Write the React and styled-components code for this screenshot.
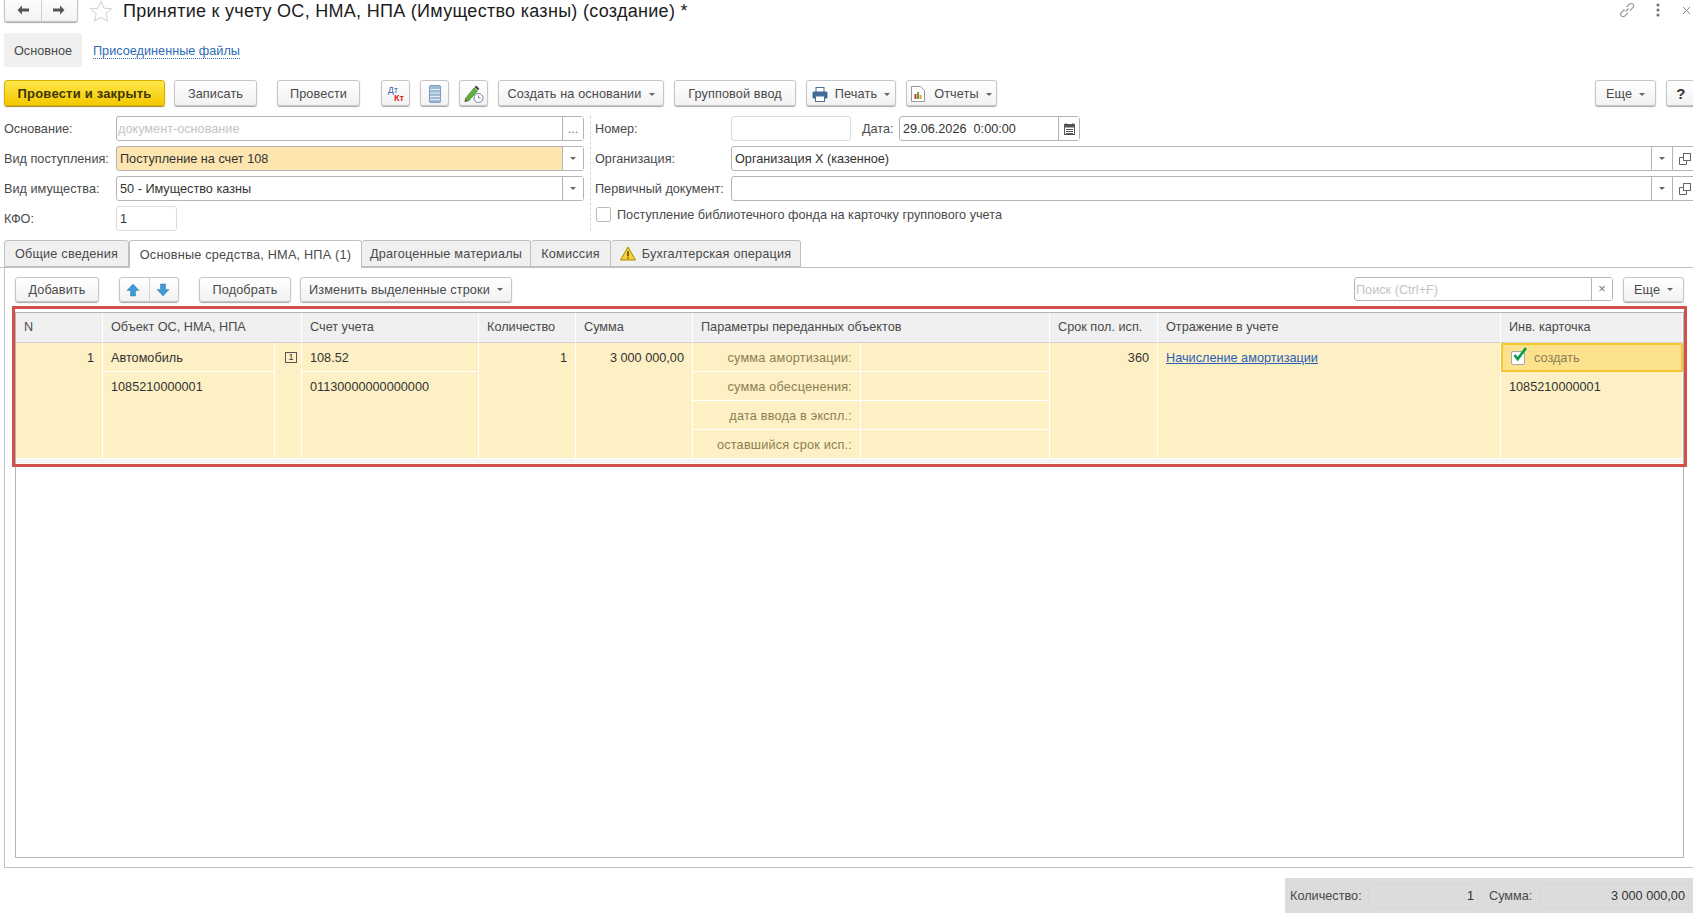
import styled, { createGlobalStyle } from "styled-components";

const GlobalStyle = createGlobalStyle`
  html, body {
    margin: 0;
    padding: 0;
    background: #fff;
    overflow: hidden;
  }
  body {
    font-family: "Liberation Sans", Arial, sans-serif;
    font-size: 12.7px;
    color: #4a4a4a;
  }
  * {
    box-sizing: border-box;
  }
`;

const Page = styled.div`
  width: 1693px;
  height: 921px;
  overflow: hidden;
  display: flex;
  flex-direction: column;
`;

const Header = styled.header`
  height: 22px;
  display: flex;
  align-items: flex-end;
  padding-left: 4px;
  flex: none;
`;

const NavGroup = styled.div`
  width: 74px;
  height: 28px;
  display: flex;
  flex: none;
  background: linear-gradient(#fff, #f3f3f3);
  border: 1px solid #c4c4c4;
  border-radius: 3px;
  box-shadow: 0 1px 1px #aaa;
`;

const NavButton = styled.div`
  flex: 1;
  display: flex;
  align-items: flex-end;
  justify-content: center;
  padding-bottom: 5px;
  & + & {
    border-left: 1px solid #d0d0d0;
  }
`;

const Title = styled.h1`
  margin: 0 0 0 10px;
  font-size: 18px;
  font-weight: 400;
  letter-spacing: 0.29px;
  line-height: 22px;
  color: #1c1c1c;
  white-space: nowrap;
`;

const HeaderActions = styled.div`
  margin-left: auto;
  display: flex;
  align-items: center;
  align-self: flex-start;
  height: 20px;
  color: #8a8a8a;
`;

const SectionBar = styled.nav`
  margin-top: 11px;
  height: 34px;
  padding-left: 4px;
  display: flex;
  align-items: center;
  flex: none;
`;

const SectionTab = styled.div`
  width: 78px;
  height: 34px;
  padding-top: 1px;
  display: flex;
  align-items: center;
  justify-content: center;
  background: #f0f0f0;
  border-radius: 3px;
`;

const SectionLink = styled.a`
  margin: 2px 0 0 11px;
  color: #2f6cb5;
  border-bottom: 1px dotted #2f6cb5;
  line-height: 14px;
`;

const Toolbar = styled.div`
  margin-top: 13px;
  width: 1705px;
  height: 26px;
  padding-left: 4px;
  display: flex;
  gap: 10px;
  flex: none;
`;

const Button = styled.button`
  width: ${(p) => p.$w}px;
  height: ${(p) => p.$h || 26}px;
  margin-left: ${(p) => p.$ml || 0}px;
  padding: ${(p) => (p.$h ? 0 : "2px 0 0")};
  flex: none;
  display: flex;
  align-items: center;
  justify-content: center;
  gap: ${(p) => p.$gap || 0}px;
  font: inherit;
  letter-spacing: 0.12px;
  color: #4a4a4a;
  background: linear-gradient(#fff, #f2f2f2);
  border: 1px solid #c6c6c6;
  border-radius: 3px;
  box-shadow: 0 1px 1px #a8a8a8;
`;

const PrimaryButton = styled(Button)`
  padding: 0;
  font-size: 13px;
  font-weight: 700;
  letter-spacing: 0.2px;
  color: #3f3500;
  background: linear-gradient(#fde84a, #f5c800);
  border-color: #d8b100;
  box-shadow: 0 1px 1px #a08a20;
`;

const PushedButton = styled(Button)`
  margin-left: auto;
`;

const HelpButton = styled(Button)`
  padding: 0 9px 0 0;
  font-size: 15px;
  font-weight: 700;
  color: #333;
`;

const Caret = styled.span`
  display: inline-block;
  vertical-align: middle;
  width: 0;
  height: 0;
  margin-left: ${(p) => (p.$flush ? 0 : 7)}px;
  border-left: 3px solid transparent;
  border-right: 3px solid transparent;
  border-top: 3px solid #666;
`;

const Form = styled.section`
  margin-top: 10px;
  margin-left: 4px;
  display: flex;
  flex: none;
  height: 115px;
`;

const FormColumn = styled.div`
  width: ${(p) => p.$w}px;
  display: flex;
  flex-direction: column;
  gap: 5px;
  flex: none;
`;

const FormDivider = styled.div`
  width: 5px;
  margin-left: 5px;
  border-left: 1px dashed #d4d4d4;
  flex: none;
`;

const FormRow = styled.div`
  height: 25px;
  display: flex;
  align-items: center;
`;

const Label = styled.label`
  width: ${(p) => p.$w}px;
  flex: none;
  white-space: nowrap;
  margin-left: ${(p) => p.$ml || 0}px;
`;

const Field = styled.div`
  width: ${(p) => p.$w}px;
  height: 25px;
  flex: none;
  display: flex;
  background: ${(p) => p.$bg || "#fff"};
  border: 1px solid ${(p) => (p.$soft ? "#dcdcdc" : "#b4b4b4")};
  border-radius: 3px;
  color: #333;
`;

const FieldValue = styled.div`
  flex: 1;
  min-width: 0;
  padding-left: ${(p) => (p.$hint ? 1 : 3)}px;
  line-height: 25px;
  white-space: nowrap;
  color: ${(p) => (p.$hint ? "#c4c4c4" : "#333")};
`;

const FieldButton = styled.div`
  width: ${(p) => p.$w || 21}px;
  flex: none;
  display: flex;
  align-items: center;
  justify-content: center;
  background: #fff;
  border-left: 1px solid #b4b4b4;
  color: #777;
`;

const CheckBox = styled.span`
  width: 15px;
  height: 15px;
  flex: none;
  background: #fff;
  border: 1px solid #bdbdbd;
  border-radius: 2px;
`;

const CheckLabel = styled.div`
  display: flex;
  align-items: center;
  gap: 6px;
  margin: 1px 0 0 1px;
`;

const TabBar = styled.div`
  margin-top: 9px;
  height: 28px;
  padding-left: 4px;
  display: flex;
  flex: none;
  border-bottom: 1px solid #c0c0c0;
`;

const Tab = styled.div`
  width: ${(p) => p.$w}px;
  height: ${(p) => (p.$active ? 28 : 27)}px;
  flex: none;
  display: flex;
  align-items: center;
  justify-content: center;
  gap: 6px;
  letter-spacing: 0.2px;
  background: ${(p) => (p.$active ? "#fff" : "#f0f0f0")};
  border: 1px solid #c0c0c0;
  border-bottom: ${(p) => (p.$active ? "none" : "1px solid #c0c0c0")};
  border-left: ${(p) => (p.$first || p.$active ? "1px solid #c0c0c0" : "none")};
  border-radius: 3px 3px 0 0;
`;

const Panel = styled.section`
  margin-left: 4px;
  height: 600px;
  flex: none;
  padding: 9px 9px 9px 10px;
  display: flex;
  flex-direction: column;
  border-left: 1px solid #c0c0c0;
  border-bottom: 1px solid #c0c0c0;
`;

const PanelToolbar = styled.div`
  height: 25px;
  flex: none;
  display: flex;
  align-items: flex-start;
`;

const ArrowGroup = styled.div`
  width: 60px;
  height: 25px;
  margin-left: 20px;
  flex: none;
  display: flex;
  background: linear-gradient(#fff, #f2f2f2);
  border: 1px solid #c6c6c6;
  border-radius: 3px;
  box-shadow: 0 1px 1px #a8a8a8;
`;

const ArrowCell = styled.div`
  flex: 1;
  padding-right: 2px;
  display: flex;
  align-items: center;
  justify-content: center;
  & + & {
    border-left: 1px solid #d4d4d4;
  }
`;

const SearchField = styled(Field)`
  margin-left: auto;
  width: 259px;
  height: 24px;
`;

const TableFrame = styled.div`
  position: relative;
  margin-top: 10px;
  flex: 1;
  border: 1px solid #b4b4b4;
`;

const RedFrame = styled.div`
  position: absolute;
  left: -4px;
  top: -7px;
  right: -4px;
  height: 161px;
  border: 3px solid #d2524b;
  pointer-events: none;
`;

const Grid = styled.div`
  display: grid;
  grid-template-columns: 87px 172px 27px 177px 97px 117px 168px 189px 108px 343px 182px;
  grid-template-rows: 30px repeat(4, 29px);
  padding-bottom: 3px;
  background: #f6f6f6;
  border-bottom: 1px solid #f0f0f0;
`;

const HeadCell = styled.div`
  grid-column: span ${(p) => p.$span || 1};
  padding-left: 8px;
  line-height: 29px;
  white-space: nowrap;
  background: #f0f0f0;
  border-right: 1px solid #fff;
  border-bottom: 1px solid #d4d4d4;
`;

const Cell = styled.div`
  grid-row: span ${(p) => p.$rows || 1};
  padding: 1px 8px 0;
  line-height: 28px;
  white-space: nowrap;
  text-align: ${(p) => p.$align || "left"};
  letter-spacing: ${(p) => (p.$hint ? "0.2px" : 0)};
  color: ${(p) => (p.$hint ? "#8c7f52" : "#333")};
  background: #fdf0c4;
  border-right: 1px solid #fff;
  border-bottom: 1px solid ${(p) => (p.$open ? "#fdf0c4" : "#fff")};
`;

const IconCell = styled(Cell)`
  padding: 9px 0 0 10px;
  line-height: 0;
`;

const NumberBadge = styled.span`
  display: inline-block;
  width: 12px;
  height: 11px;
  font-size: 9px;
  line-height: 9px;
  text-align: center;
  color: #333;
  border: 1px solid #555;
`;

const TableLink = styled.a`
  color: #2a5fb4;
  text-decoration: underline;
`;

const ActiveCell = styled(Cell)`
  display: flex;
  align-items: center;
  gap: 9px;
  padding: 0 0 0 8px;
  color: #8c7f52;
  background: #fde28e;
  border: 2px solid #fbc52d;
`;

const TickBox = styled.span`
  position: relative;
  width: 14px;
  height: 14px;
  flex: none;
  background: #fff;
  border: 1px solid #a9a9a9;
  border-radius: 2px;
  & > svg {
    position: absolute;
    left: 0;
    top: -5px;
  }
`;

const Footer = styled.footer`
  margin-top: 10px;
  margin-left: auto;
  width: 408px;
  height: 35px;
  flex: none;
  display: flex;
  align-items: center;
  padding-left: 5px;
  background: #dcdcdc;
`;

const FooterField = styled.div`
  width: ${(p) => p.$w}px;
  height: 24px;
  flex: none;
  padding-right: 3px;
  line-height: 23px;
  text-align: right;
  color: #333;
  border: 1px solid #d6d6d6;
  border-radius: 3px;
`;

const FooterLabel = styled.span`
  width: ${(p) => p.$w}px;
  flex: none;
  margin-left: ${(p) => p.$ml || 0}px;
`;

const ArrowLeft = () => (
  <svg width="14" height="12" viewBox="0 0 14 12">
    <path d="M6 1.5 1.5 6 6 10.5V7.5h7v-3H6z" fill="#555" />
  </svg>
);

const ArrowRight = () => (
  <svg width="14" height="12" viewBox="0 0 14 12">
    <path d="M8 1.5 12.5 6 8 10.5V7.5H1v-3h7z" fill="#555" />
  </svg>
);

const Star = () => (
  <svg width="24" height="22" viewBox="0 0 24 22" style={{ marginLeft: 11, flex: "none" }}>
    <path
      d="M12 1.2l3 7 7.6.6-5.8 5 1.8 7.4L12 17.3 5.4 21.2l1.8-7.4-5.8-5 7.6-.6z"
      fill="#fff"
      stroke="#cfcfcf"
    />
  </svg>
);

const LinkIcon = () => (
  <svg width="16" height="16" viewBox="0 0 16 16" fill="none" stroke="#999" strokeWidth="1.2">
    <path d="M6.5 9.5l3-3M5.5 7.5l-3 3a2.4 2.4 0 0 0 3.4 3.4l3-3M7.5 5.2l3-3a2.4 2.4 0 0 1 3.4 3.4l-3 3" />
  </svg>
);

const Dots = () => (
  <svg width="4" height="14" viewBox="0 0 4 14" style={{ marginLeft: 21 }}>
    <circle cx="2" cy="2" r="1.6" fill="#777" />
    <circle cx="2" cy="7" r="1.6" fill="#777" />
    <circle cx="2" cy="12" r="1.6" fill="#777" />
  </svg>
);

const CloseIcon = () => (
  <svg width="9" height="9" viewBox="0 0 9 9" style={{ marginLeft: 22, marginRight: 2 }}>
    <path d="M1 1l7 7M8 1 1 8" stroke="#888" strokeWidth="1" />
  </svg>
);

const DebitCredit = () => (
  <svg width="24" height="22" viewBox="0 0 24 22">
    <text x="4" y="10" fontSize="8.5" fill="#2a62a8" fontFamily="Liberation Sans">Дт</text>
    <text x="10" y="18" fontSize="9" fontWeight="700" fill="#d8231c" fontFamily="Liberation Sans">Кт</text>
  </svg>
);

const ListIcon = () => (
  <svg width="12" height="18" viewBox="0 0 12 18">
    <rect x="0.5" y="0.5" width="11" height="17" rx="1" fill="#9fbad6" stroke="#7f9ab8" />
    <path d="M1 4.5h10M1 8h10M1 11.5h10M1 14.5h10" stroke="#e4edf5" />
  </svg>
);

const PencilIcon = () => (
  <svg width="22" height="20" viewBox="0 0 22 20">
    <path d="M2 15 11 4l3.5 3L5.5 17z" fill="#5fae3c" stroke="#3c7d25" strokeWidth="0.6" />
    <path d="M11.5 3.2 13 1.6l3.4 3-1.4 1.7z" fill="#444" />
    <path d="M2 15l-.5 3.2 4-1.2z" fill="#6a5a3a" />
    <circle cx="15.5" cy="14" r="4.5" fill="#fff" stroke="#6c85a3" />
    <path d="M15.5 11.5V14h2" fill="none" stroke="#6c85a3" />
  </svg>
);

const PrinterIcon = () => (
  <svg width="16" height="15" viewBox="0 0 16 15">
    <rect x="4" y="0.5" width="8" height="5" fill="#fff" stroke="#4f6f8f" />
    <rect x="0.5" y="4.5" width="15" height="7" rx="1.5" fill="#3f6c96" />
    <rect x="3.5" y="9" width="9" height="5.5" fill="#fff" stroke="#4f6f8f" />
  </svg>
);

const ReportIcon = () => (
  <svg width="14" height="16" viewBox="0 0 14 16">
    <path d="M.5.5h9l4 4v11H.5z" fill="#fff" stroke="#999" />
    <rect x="3.5" y="8" width="2" height="5" fill="#d8342a" />
    <rect x="6" y="6" width="2" height="7" fill="#5fa83a" />
    <rect x="8.5" y="9" width="2" height="4" fill="#e0a020" />
  </svg>
);

const CalendarIcon = () => (
  <svg width="11" height="12" viewBox="0 0 11 12">
    <rect x="0.5" y="1.5" width="10" height="10" fill="#fff" stroke="#555" />
    <path d="M.5 2h10v2.5H.5z" fill="#555" />
    <path d="M2 0v2M9 0v2M2 6.5h7M2 8.5h7M2 10.5h7" stroke="#555" />
  </svg>
);

const OpenIcon = () => (
  <svg width="12" height="12" viewBox="0 0 12 12" fill="none" stroke="#666">
    <rect x="4.5" y="0.5" width="7" height="7" fill="#fff" />
    <path d="M4.5 4.5H.5v7h7V7.5" />
  </svg>
);

const BlueArrow = ({ down }) => (
  <svg width="14" height="14" viewBox="0 0 14 14" style={down ? { transform: "rotate(180deg)" } : undefined}>
    <path d="M7 1 13 7.5H9.5V13h-5V7.5H1z" fill="#3f9ad6" stroke="#2c7db5" strokeWidth="0.5" />
  </svg>
);

const Warning = () => (
  <svg width="16" height="15" viewBox="0 0 15 14">
    <path d="M7.5 1 14.5 13H.5z" fill="#f8d23a" stroke="#b99411" strokeLinejoin="round" />
    <path d="M7.5 5v4.5M7.5 10.5v1.2" stroke="#4a3b00" strokeWidth="1.4" />
  </svg>
);

const Tick = () => (
  <svg width="16" height="16" viewBox="0 0 16 16">
    <path d="M2.5 8l3.2 4L14 1" fill="none" stroke="#0f9a4a" strokeWidth="2.8" />
  </svg>
);

const Dropdown = () => (
  <FieldButton>
    <Caret $flush />
  </FieldButton>
);

export default function App() {
  return (
    <Page>
      <GlobalStyle />
      <Header>
        <NavGroup>
          <NavButton>
            <ArrowLeft />
          </NavButton>
          <NavButton>
            <ArrowRight />
          </NavButton>
        </NavGroup>
        <Star />
        <Title>Принятие к учету ОС, НМА, НПА (Имущество казны) (создание) *</Title>
        <HeaderActions>
          <LinkIcon />
          <Dots />
          <CloseIcon />
        </HeaderActions>
      </Header>

      <SectionBar>
        <SectionTab>Основное</SectionTab>
        <SectionLink>Присоединенные файлы</SectionLink>
      </SectionBar>

      <Toolbar>
        <PrimaryButton $w={161}>Провести и закрыть</PrimaryButton>
        <Button $w={83} $ml={-1}>Записать</Button>
        <Button $w={83} $ml={10}>Провести</Button>
        <Button $w={29} $ml={11}>
          <DebitCredit />
        </Button>
        <Button $w={29}>
          <ListIcon />
        </Button>
        <Button $w={29}>
          <PencilIcon />
        </Button>
        <Button $w={166}>
          Создать на основании
          <Caret />
        </Button>
        <Button $w={122}>Групповой ввод</Button>
        <Button $w={90} $gap={7}>
          <PrinterIcon />
          <span>
            Печать
            <Caret />
          </span>
        </Button>
        <Button $w={91} $gap={9}>
          <ReportIcon />
          <span>
            Отчеты
            <Caret />
          </span>
        </Button>
        <PushedButton $w={61}>
          Еще
          <Caret />
        </PushedButton>
        <HelpButton $w={39}>?</HelpButton>
      </Toolbar>

      <Form>
        <FormColumn $w={581}>
          <FormRow>
            <Label $w={112}>Основание:</Label>
            <Field $w={468}>
              <FieldValue $hint>документ-основание</FieldValue>
              <FieldButton>...</FieldButton>
            </Field>
          </FormRow>
          <FormRow>
            <Label $w={112}>Вид поступления:</Label>
            <Field $w={468} $bg="#fde5b0">
              <FieldValue>Поступление на счет 108</FieldValue>
              <Dropdown />
            </Field>
          </FormRow>
          <FormRow>
            <Label $w={112}>Вид имущества:</Label>
            <Field $w={468}>
              <FieldValue>50 - Имущество казны</FieldValue>
              <Dropdown />
            </Field>
          </FormRow>
          <FormRow>
            <Label $w={112}>КФО:</Label>
            <Field $w={61} $soft>
              <FieldValue>1</FieldValue>
            </Field>
          </FormRow>
        </FormColumn>
        <FormDivider />
        <FormColumn $w={1102}>
          <FormRow>
            <Label $w={136}>Номер:</Label>
            <Field $w={120} $soft />
            <Label $w={37} $ml={11}>Дата:</Label>
            <Field $w={181}>
              <FieldValue>29.06.2026&nbsp; 0:00:00</FieldValue>
              <FieldButton>
                <CalendarIcon />
              </FieldButton>
            </Field>
          </FormRow>
          <FormRow>
            <Label $w={136}>Организация:</Label>
            <Field $w={966}>
              <FieldValue>Организация Х (казенное)</FieldValue>
              <Dropdown />
              <FieldButton $w={24}>
                <OpenIcon />
              </FieldButton>
            </Field>
          </FormRow>
          <FormRow>
            <Label $w={136}>Первичный документ:</Label>
            <Field $w={966}>
              <FieldValue />
              <Dropdown />
              <FieldButton $w={24}>
                <OpenIcon />
              </FieldButton>
            </Field>
          </FormRow>
          <CheckLabel>
            <CheckBox />
            Поступление библиотечного фонда на карточку группового учета
          </CheckLabel>
        </FormColumn>
      </Form>

      <TabBar>
        <Tab $w={125} $first>Общие сведения</Tab>
        <Tab $w={233} $active>Основные средства, НМА, НПА (1)</Tab>
        <Tab $w={169}>Драгоценные материалы</Tab>
        <Tab $w={80}>Комиссия</Tab>
        <Tab $w={190}>
          <Warning />
          Бухгалтерская операция
        </Tab>
      </TabBar>

      <Panel>
        <PanelToolbar>
          <Button $w={84} $h={25}>Добавить</Button>
          <ArrowGroup>
            <ArrowCell>
              <BlueArrow />
            </ArrowCell>
            <ArrowCell>
              <BlueArrow down />
            </ArrowCell>
          </ArrowGroup>
          <Button $w={92} $h={25} $ml={20}>Подобрать</Button>
          <Button $w={212} $h={25} $ml={9}>
            Изменить выделенные строки
            <Caret />
          </Button>
          <SearchField>
            <FieldValue $hint>Поиск (Ctrl+F)</FieldValue>
            <FieldButton>×</FieldButton>
          </SearchField>
          <Button $w={61} $h={25} $ml={10}>
            Еще
            <Caret />
          </Button>
        </PanelToolbar>

        <TableFrame>
          <Grid>
            <HeadCell>N</HeadCell>
            <HeadCell $span={2}>Объект ОС, НМА, НПА</HeadCell>
            <HeadCell>Счет учета</HeadCell>
            <HeadCell>Количество</HeadCell>
            <HeadCell>Сумма</HeadCell>
            <HeadCell $span={2}>Параметры переданных объектов</HeadCell>
            <HeadCell>Срок пол. исп.</HeadCell>
            <HeadCell>Отражение в учете</HeadCell>
            <HeadCell>Инв. карточка</HeadCell>

            <Cell $rows={4} $align="right">1</Cell>
            <Cell>Автомобиль</Cell>
            <IconCell $rows={4}>
              <NumberBadge>1</NumberBadge>
            </IconCell>
            <Cell>108.52</Cell>
            <Cell $rows={4} $align="right">1</Cell>
            <Cell $rows={4} $align="right">3 000 000,00</Cell>
            <Cell $hint $align="right">сумма амортизации:</Cell>
            <Cell />
            <Cell $rows={4} $align="right">360</Cell>
            <Cell $rows={4}>
              <TableLink>Начисление амортизации</TableLink>
            </Cell>
            <ActiveCell>
              <TickBox>
                <Tick />
              </TickBox>
              создать
            </ActiveCell>

            <Cell $rows={3}>1085210000001</Cell>
            <Cell $rows={3}>01130000000000000</Cell>
            <Cell $hint $align="right">сумма обесценения:</Cell>
            <Cell />
            <Cell $rows={3}>1085210000001</Cell>

            <Cell $hint $align="right">дата ввода в экспл.:</Cell>
            <Cell />
            <Cell $hint $align="right">оставшийся срок исп.:</Cell>
            <Cell />
          </Grid>
          <RedFrame />
        </TableFrame>
      </Panel>

      <Footer>
        <FooterLabel $w={78}>Количество:</FooterLabel>
        <FooterField $w={110}>1</FooterField>
        <FooterLabel $w={50} $ml={11}>Сумма:</FooterLabel>
        <FooterField $w={150}>3 000 000,00</FooterField>
      </Footer>
    </Page>
  );
}
